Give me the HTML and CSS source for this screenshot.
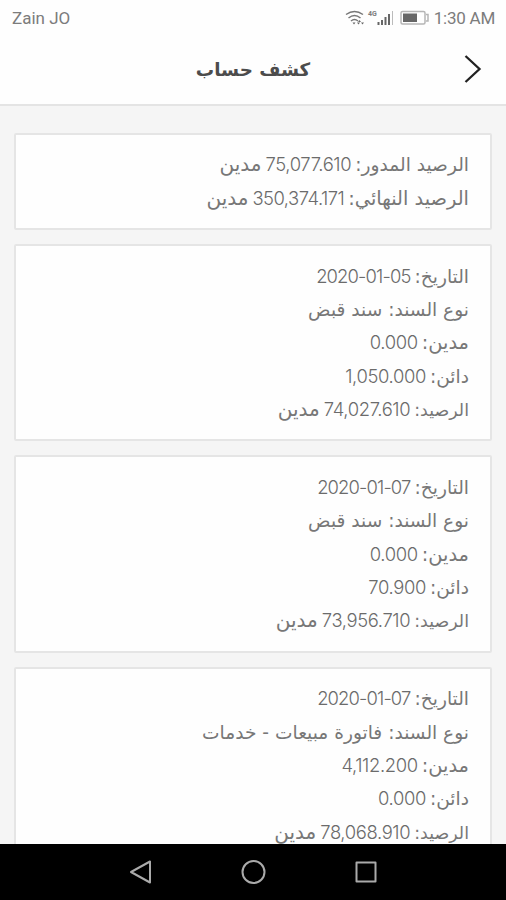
FILE: index.html
```html
<!DOCTYPE html>
<html lang="ar" dir="rtl">
<head>
<meta charset="utf-8">
<title>كشف حساب</title>
<link rel="stylesheet" href="styles.css">
</head>
<body>
<div class="status" dir="ltr">
  <span class="carrier">Zain JO</span>
  <svg class="wifi" width="19" height="16" viewBox="0 0 19 16"><path d="M1 4.500Q9.500-1.500 18 4.500M3.500 8Q9.500 3 15.500 8M6 11Q9.500 8 13 11"/><path class="solid" d="M7.500 12.500h3l-1.500 2zM13 12l1.500-2 1.500 2zM16 12.500h3l-1.500 2zM12 12.500h3l-1.500 2z"/></svg>
  <span class="net">4G</span>
  <svg class="signal" width="17" height="16" viewBox="0 0 17 16"><path d="M1.500 12v3M5 10v5M8.500 7v8M12 4v11"/><path class="faint" d="M15.500 1v14"/></svg>
  <svg class="battery" width="29" height="16" viewBox="0 0 29 16"><rect class="case" x="1" y="1.500" width="24" height="12.500" rx="1.500"/><rect class="charge" x="3" y="3.500" width="14" height="8.500"/><path class="case" d="M26 4.500h2v6.500h-2"/></svg>
  <span class="time">1:30 AM</span>
</div>
<header class="header"><h1>كشف حساب</h1>
  <svg class="chevron" width="18" height="30" viewBox="0 0 18 30"><path d="M1.500 2 15.500 15 1.500 28"/></svg>
</header>
<main class="list">
  <section class="card">
    <p><span>الرصيد المدور:</span><b dir="ltr">75,077.610</b><span class="unit">مدين</span></p>
    <p><span class="final">الرصيد النهائي:</span><b class="total" dir="ltr">350,374.171</b><span class="unit">مدين</span></p>
  </section>
  <section class="card">
    <p><span>التاريخ:</span><b class="tight" dir="ltr">2020-01-05</b></p>
    <p><span>نوع السند: سند قبض</span></p>
    <p><span class="debit">مدين:</span><b dir="ltr">0.000</b></p>
    <p><span>دائن:</span><b dir="ltr">1,050.000</b></p>
    <p><span class="balance">الرصيد:</span><b dir="ltr">74,027.610</b><span class="unit">مدين</span></p>
  </section>
  <section class="card">
    <p><span>التاريخ:</span><b class="tight" dir="ltr">2020-01-07</b></p>
    <p><span>نوع السند: سند قبض</span></p>
    <p><span class="debit">مدين:</span><b dir="ltr">0.000</b></p>
    <p><span>دائن:</span><b dir="ltr">70.900</b></p>
    <p><span class="balance">الرصيد:</span><b dir="ltr">73,956.710</b><span class="unit">مدين</span></p>
  </section>
  <section class="card">
    <p><span>التاريخ:</span><b class="tight" dir="ltr">2020-01-07</b></p>
    <p><span>نوع السند: فاتورة مبيعات - خدمات</span></p>
    <p><span class="debit">مدين:</span><b dir="ltr">4,112.200</b></p>
    <p><span>دائن:</span><b dir="ltr">0.000</b></p>
    <p><span class="balance">الرصيد:</span><b dir="ltr">78,068.910</b><span class="unit">مدين</span></p>
  </section>
</main>
<nav class="nav" dir="ltr">
  <svg width="26" height="26" viewBox="0 0 26 26"><path d="M22 2.500v21L3 13z"/></svg>
  <svg width="26" height="26" viewBox="0 0 26 26"><circle cx="13.500" cy="13" r="11"/></svg>
  <svg width="26" height="26" viewBox="0 0 26 26"><rect x="3.500" y="3.500" width="19" height="19"/></svg>
</nav>
</body>
</html>
```
FILE: styles.css
```css
* { box-sizing: border-box; margin: 0; }
body {
  width: 506px; height: 900px; overflow: hidden;
  display: flex; flex-direction: column;
  background: #f5f5f5; color: #777;
  font-family: "DejaVu Sans", sans-serif;
}
svg { fill: none; flex: none; }
.status {
  height: 36px; flex: none; display: flex; align-items: center;
  padding: 0 11px 0 12px; background: #fefefe; color: #7c7c7c;
  font: 17px/36px Roboto, sans-serif;
}
.carrier { flex: 1; }
.time { letter-spacing: -.25px; }
.wifi { stroke: #777; stroke-width: 1.5; }
.wifi .solid { fill: #666; stroke: none; }
.net { font: 700 7px/8px Roboto, sans-serif; align-self: flex-start; margin: 10px 0 0 4px; }
.signal { stroke: #666; stroke-width: 2; }
.signal .faint { stroke: #bbb; stroke-width: 1; }
.battery { margin: 0 5px 0 6px; }
.battery .case { stroke: #b5b5b5; stroke-width: 1.5; }
.battery .charge { fill: #666; }
.header {
  height: 70px; flex: none; display: flex; align-items: center; justify-content: center;
  position: relative; background: #fefefe; border-bottom: 2px solid #e4e4e4;
}
.header h1 { font-size: 18.3px; line-height: 30px; font-weight: 700; color: #4c4c4c; }
.chevron { position: absolute; right: 24px; top: 18px; stroke: #222; stroke-width: 2.3; }
.list { flex: 1; min-height: 0; overflow: hidden; padding: 26.600px 14px 0; display: flex; flex-direction: column; gap: 14.200px; }
.card { flex: none; background: #fefefe; border: 2px solid #e5e5e5; border-radius: 2px; padding: 13.700px 21px 13px; }
.card p { height: 33.3px; display: flex; align-items: baseline; gap: 4px; white-space: nowrap; line-height: 33.3px; }
.card span { font-size: 18.6px; }
.card .final { font-size: 19.4px; }
.card .balance { font-size: 17.4px; }
.card .debit { font-size: 19.4px; }
.card .unit { font-size: 20px; }
.card b { font: 300 18.4px/33.3px Inter, sans-serif; letter-spacing: -.35px; color: #6b6b6b; }
.card .tight { letter-spacing: -.85px; }
.card .total { letter-spacing: -.5px; }
.nav { height: 56px; flex: none; background: #000; display: flex; justify-content: center; align-items: center; gap: 86.500px; }
.nav svg { stroke: #aaa; stroke-width: 2; stroke-linejoin: round; }
```
